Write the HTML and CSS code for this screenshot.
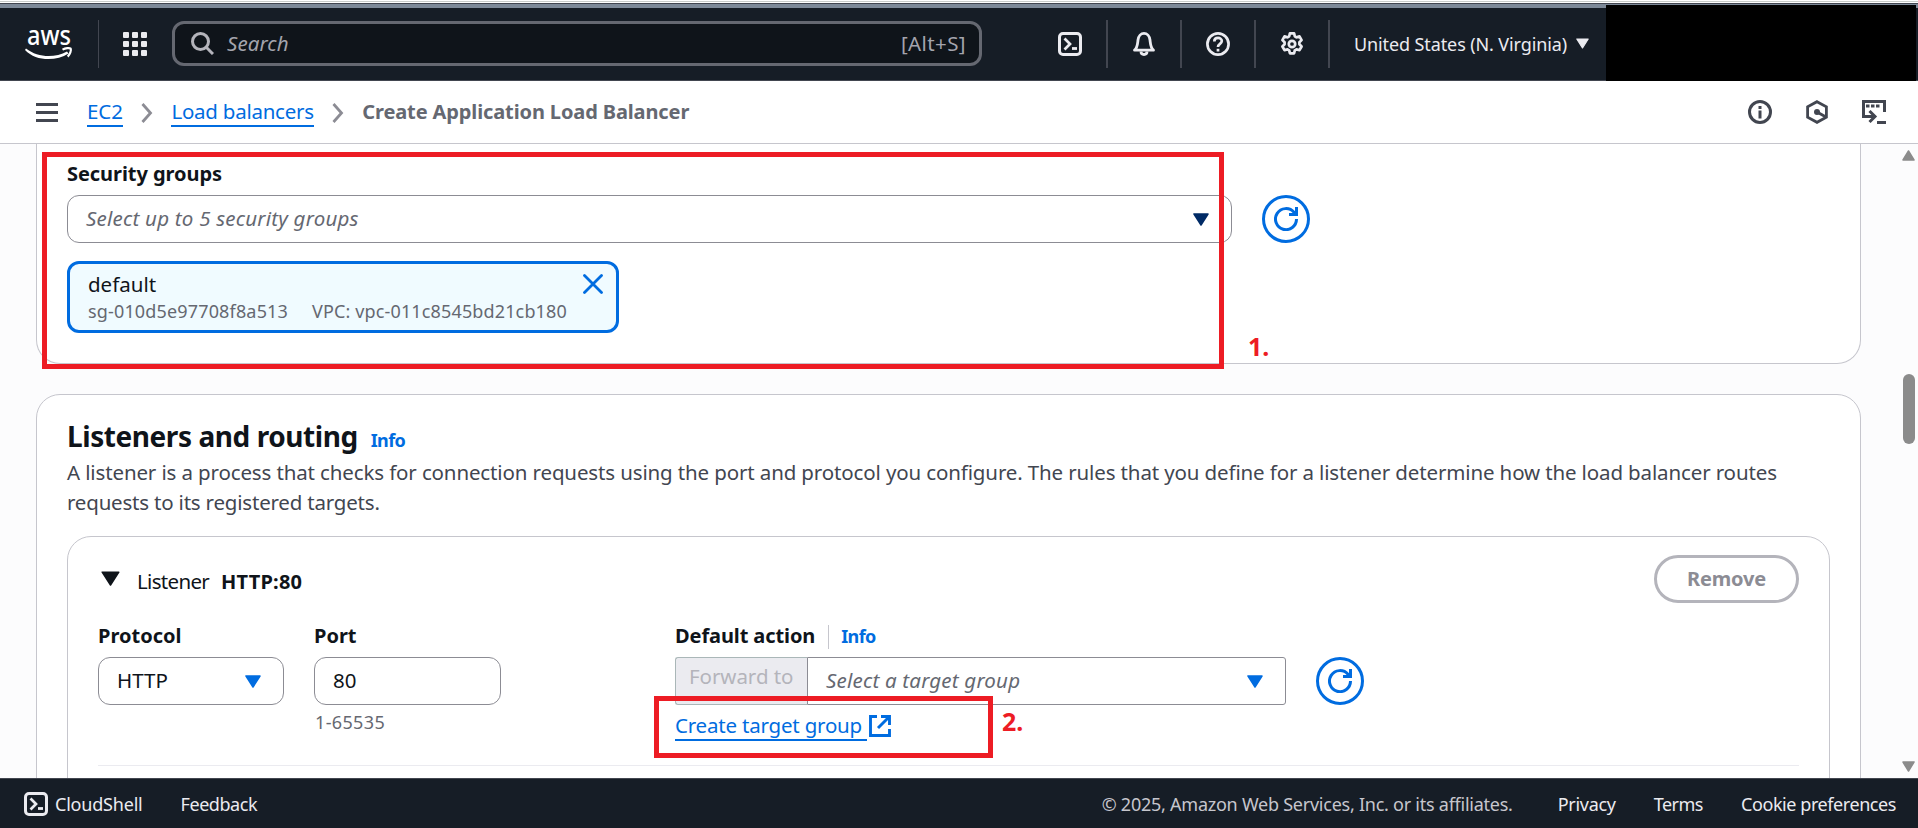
FILE: index.html
```html
<!DOCTYPE html>
<html lang="en">
<head>
<meta charset="utf-8">
<title>Create Application Load Balancer</title>
<link rel="stylesheet" href="styles.css">
</head>
<body>
<svg class="defs" width="0" height="0">
  <symbol id="shell" viewBox="0 0 24 24"><rect x="1.5" y="1.5" width="21" height="21" rx="3.5" fill="none" stroke="currentColor" stroke-width="3"/><path d="M6.5 6.5l5.5 5.5-5.5 5.5" fill="none" stroke="currentColor" stroke-width="2.7"/><path d="M14 16.5h5" stroke="currentColor" stroke-width="2.8"/></symbol>
  <symbol id="refresh" viewBox="0 0 24 24"><path d="M22.5 12A10.5 10.5 0 1 1 20 5.300L22 8" fill="none" stroke="currentColor" stroke-width="3"/><path d="M22.500 0v7.500H15" fill="none" stroke="currentColor" stroke-width="3"/></symbol>
  <symbol id="caret" viewBox="0 0 16 13"><path d="M1 1h14L8 12z" fill="currentColor" stroke="currentColor" stroke-width="1.500" stroke-linejoin="round"/></symbol>
  <symbol id="chevron" viewBox="0 0 12 20"><path d="M1.500 1L9.500 10l-8 9" fill="none" stroke="currentColor" stroke-width="2.800"/></symbol>
</svg>
<div class="page">
  <div class="strip"></div>
  <header class="topbar">
    <svg class="logo" width="50" height="52" viewBox="0 -10 50 52"><text class="aws" x="2" y="18" textLength="44" lengthAdjust="spacingAndGlyphs">aws</text><path d="M1 21.500C13 31 30 31 42 24.500l1.500 2C31 34.500 11 34.500 0 23z" fill="#fff"/><path d="M37.500 22.600c3-1.600 7-2 8.200-1 .8 1.700-.7 5.800-3 8" fill="none" stroke="#fff" stroke-width="2.200"/></svg>
    <span class="rule rule-logo"></span>
    <svg class="apps" width="24" height="24" viewBox="0 0 24 24" fill="#ebebf0"><rect width="6" height="6" rx="1"/><rect x="9" width="6" height="6" rx="1"/><rect x="18" width="6" height="6" rx="1"/><rect y="9" width="6" height="6" rx="1"/><rect x="9" y="9" width="6" height="6" rx="1"/><rect x="18" y="9" width="6" height="6" rx="1"/><rect y="18" width="6" height="6" rx="1"/><rect x="9" y="18" width="6" height="6" rx="1"/><rect x="18" y="18" width="6" height="6" rx="1"/></svg>
    <div class="search">
      <svg width="23" height="23" viewBox="0 0 23 23" fill="none" stroke="#b4b4bb" stroke-width="3"><circle cx="9.500" cy="9.500" r="8"/><path d="M15 15l7 7"/></svg>
      <em>Search</em><span class="hint-key">[Alt+S]</span>
    </div>
    <nav class="tools">
      <svg width="24" height="24"><use href="#shell"/></svg>
      <span class="rule"></span>
      <svg width="24" height="24" viewBox="0 0 24 24" fill="none" stroke="currentColor" stroke-width="2.800" stroke-linejoin="round"><path d="M2.500 18.200C5.500 16 5.500 12 6 8c.5-4 3-6.600 6-6.600S17.500 4 18 8c.5 4 .5 8 3.500 10.200z"/><path d="M9 19.500c0 4 6 4 6 0" /></svg>
      <span class="rule"></span>
      <svg width="24" height="24" viewBox="0 0 24 24" fill="none" stroke="currentColor" stroke-width="2.700"><circle cx="12" cy="12" r="10.600"/><path d="M8.300 9.500c0-4.800 7.500-4.600 7.500-.4 0 2.900-3.800 2.800-3.800 6"/><path d="M12 16.800v2.700"/></svg>
      <span class="rule"></span>
      <svg width="24" height="24" viewBox="0 0 24 24" fill="none" stroke="currentColor" stroke-width="2.700" stroke-linejoin="round"><path d="M9.900 1.400h4.200l.7 2.900 1.700 1 3-.9 2.100 3.700-2.200 2.200v2l2.200 2.200-2.100 3.700-3-.8-1.700 1-.7 2.900H9.900l-.7-2.900-1.700-1-3 .8-2.100-3.700 2.200-2.200v-2L2.400 8.100l2.100-3.700 3 .9 1.700-1z"/><circle cx="12" cy="12" r="3.200"/></svg>
      <span class="rule"></span>
    </nav>
    <span class="region">United States (N. Virginia)</span>
    <svg class="region-caret" width="13" height="11"><use href="#caret"/></svg>
    <div class="account"></div>
  </header>

  <div class="crumbs">
    <svg class="burger" width="22" height="19" viewBox="0 0 22 19" stroke="#424650" stroke-width="3"><path d="M0 1.500h22M0 9.500h22M0 17.500h22"/></svg>
    <a class="link ec2">EC2</a>
    <svg class="chev" width="12" height="20"><use href="#chevron"/></svg>
    <a class="link lbs">Load balancers</a>
    <svg class="chev" width="12" height="20"><use href="#chevron"/></svg>
    <b class="current">Create Application Load Balancer</b>
    <div class="panel-icons">
      <svg width="24" height="24" viewBox="0 0 24 24" fill="none" stroke="currentColor" stroke-width="3"><circle cx="12" cy="12" r="10.500"/><path d="M12 6v3M12 10.500v8"/></svg>
      <svg width="24" height="24" viewBox="0 0 24 24" fill="none" stroke="currentColor" stroke-width="2.800"><path d="M12 1.700l9.400 5.100v10.400L12 22.300l-9.400-5.100V6.800z"/><circle cx="12" cy="12" r="3" fill="currentColor" stroke="none"/><path d="M12 12l9 5"/></svg>
      <svg width="24" height="24" viewBox="0 0 24 24" fill="none" stroke="currentColor" stroke-width="3"><path d="M22.500 12V1.500h-21v15H12"/><path d="M7.500 11l5.500 5.500L7.500 22M15 22.500h9"/><path d="M4 6h3.500M9 6h3.500M14 6h3.500"/></svg>
    </div>
  </div>

  <main class="content">
    <div class="cards">
      <section class="card card-security">
        <b class="label security">Security groups</b>
        <div class="row">
          <div class="field select-sg"><em>Select up to 5 security groups</em><svg class="navy" width="16" height="13"><use href="#caret"/></svg></div>
          <span class="round"><svg width="24" height="24"><use href="#refresh"/></svg></span>
        </div>
        <div class="chip">
          <div class="chip-name">default</div>
          <div class="chip-meta"><span class="sg">sg-010d5e97708f8a513</span><span class="vpc">VPC: vpc-011c8545bd21cb180</span></div>
          <svg class="chip-x" width="20" height="20" viewBox="0 0 20 20" stroke="#006ce0" stroke-width="2.800" stroke-linecap="round"><path d="M1.500 1.500l17 17M18.500 1.500l-17 17"/></svg>
        </div>
      </section>

      <section class="card card-listeners">
        <div class="heading"><h2>Listeners and routing</h2><b class="info">Info</b></div>
        <p class="desc"><span>A listener is a process that checks for connection requests using the port and protocol you configure. The rules that you define for a listener determine how the load balancer routes</span><br><span class="desc-end">requests to its registered targets.</span></p>
        <div class="listener">
          <div class="listener-head">
            <svg class="ink" width="19" height="15" viewBox="0 0 19 15"><path d="M1.200 1.200h16.600L9.500 14z" fill="currentColor" stroke="currentColor" stroke-width="1.500" stroke-linejoin="round"/></svg>
            <span class="lname">Listener</span><b class="lport">HTTP:80</b>
            <button class="remove">Remove</button>
          </div>
          <div class="fields">
            <div class="col-protocol"><b class="label protocol">Protocol</b><div class="field http"><span>HTTP</span><svg class="blue" width="16" height="13"><use href="#caret"/></svg></div></div>
            <div class="col-port"><b class="label port">Port</b><div class="field"><span>80</span></div><div class="hint">1-65535</div></div>
            <div class="col-action">
              <div class="label action"><b>Default action</b><span class="bar"></span><b class="info">Info</b></div>
              <div class="joined"><div class="forward">Forward to</div><div class="field target"><em>Select a target group</em><svg class="blue" width="16" height="13"><use href="#caret"/></svg></div></div>
              <div class="create"><a class="link">Create target group&nbsp;</a><svg width="22" height="22" viewBox="0 0 22 22" fill="none" stroke="#006ce0" stroke-width="2.900"><path d="M8 1.500H1.500v19h19V14M12 1.500h8.500V10M20 2L9 13"/></svg></div>
            </div>
            <span class="round round-action"><svg width="24" height="24"><use href="#refresh"/></svg></span>
          </div>
          <div class="divider"></div>
        </div>
      </section>
    </div>
    <div class="scroll"><svg width="13" height="11" viewBox="0 0 13 11"><path d="M6.500 1L12 10H1z" fill="#8b8b8b" stroke="#8b8b8b" stroke-width="1.500" stroke-linejoin="round"/></svg><span class="thumb"></span><svg class="down" width="13" height="11" viewBox="0 0 13 11"><path d="M6.500 10L12 1H1z" fill="#8b8b8b" stroke="#8b8b8b" stroke-width="1.500" stroke-linejoin="round"/></svg></div>
  </main>

  <footer class="footer">
    <svg width="24" height="24"><use href="#shell"/></svg>
    <span class="cloudshell">CloudShell</span><span class="feedback">Feedback</span>
    <span class="copy">© 2025, Amazon Web Services, Inc. or its affiliates.</span>
    <span class="privacy">Privacy</span><span class="terms">Terms</span><span class="cookies">Cookie preferences</span>
  </footer>

  <div class="mark mark-one"></div><b class="num num-one">1.</b>
  <div class="mark mark-two"></div><b class="num num-two">2.</b>
</div>
</body>
</html>
```
FILE: styles.css
```css
* { box-sizing: border-box; }
body { margin: 0; font: 20.5px/30px "Noto Sans", "Open Sans", sans-serif; color: #0f141a; overflow: hidden; }
svg { display: block; flex: none; }
b { font-size: 20px; font-weight: 700; }
span, b, em, a { white-space: nowrap; }
.defs { position: absolute; }
.page { position: relative; width: 1918px; height: 828px; display: flex; flex-direction: column; overflow: hidden; }

.strip { flex: none; height: 8px; background: linear-gradient(#fff 0 1px, #c9ccc9 1px 2px, #fff 2px 3px, #424650 3px 4px, #7d8998 4px); }
.topbar { flex: none; height: 73px; display: flex; align-items: center; padding: 0 2px 1px 25px; background: #161d26; border-bottom: 1px solid #424650; color: #ebebf0; }
.logo { margin-bottom: 2px; }
.aws { font: 500 26.5px "Noto Sans", sans-serif; fill: #fff; }
.rule { flex: none; width: 2px; height: 48px; background: #424650; }
.rule-logo { width: 1px; margin-left: 23px; }
.apps { margin-left: 24px; }
.search { flex: none; width: 810px; height: 45px; margin-left: 25px; padding: 0 13px 0 16px; display: flex; align-items: center; border: 3px solid #656871; border-radius: 12px; background: #0f141a; color: #a4a4ad; }
.search em { margin-left: 13px; letter-spacing: .1px; }
.hint-key { margin-left: auto; letter-spacing: .4px; }
.search em, .hint-key { padding-bottom: 2px; }
.tools { display: flex; align-items: center; gap: 24px; margin-left: 76px; }
.region { margin-left: 24px; font-size: 18px; letter-spacing: -.11px; }
.region-caret { margin-left: 9px; }
.account { align-self: stretch; flex: none; width: 310px; margin: -3px 0 -2px auto; background: #000; }

.crumbs { flex: none; height: 63px; display: flex; align-items: center; padding: 0 32px 0 36px; border-bottom: 1px solid #c6c6cd; background: #fff; }
.link { color: #006ce0; border-bottom: 2px solid #006ce0; line-height: 28px; }
.ec2 { margin-left: 29px; letter-spacing: -.05px; }
.lbs { letter-spacing: -.25px; }
.chev { margin: 1px 18px 0 18.5px; color: #8c8c94; }
.current { color: #656871; letter-spacing: -.12px; }
.panel-icons { margin-left: auto; display: flex; gap: 33px; color: #424650; }

.content { flex: none; height: 634px; display: flex; background: #fcfcfd; overflow: hidden; }
.cards { width: 1861px; padding-left: 36px; }
.card { border: 1px solid #c6c6cd; background: #fff; }
.card-security { height: 220px; padding: 15px 30px 0; border-top: 0; border-radius: 0 0 24px 24px; }
.label { display: block; height: 30px; margin-bottom: 6px; }
.security { letter-spacing: -.06px; }
.row { display: flex; gap: 30px; }
.field { display: flex; align-items: center; justify-content: space-between; height: 48px; padding: 0 17px 0 18px; border: 1px solid #8c8c94; border-radius: 12px; background: #fff; }
.field em { color: #656871; letter-spacing: .22px; }
.field em, .field span { padding-bottom: 2px; }
.select-sg { width: 1165px; padding-right: 22px; }
.navy { color: #002b66; }
.blue { color: #006ce0; }
.round { display: flex; align-items: center; justify-content: center; width: 48px; height: 48px; border: 3px solid #006ce0; border-radius: 50%; color: #006ce0; }
.chip { position: relative; width: 552px; height: 72px; margin-top: 18px; padding: 5px 0 0 18px; border: 3px solid #006ce0; border-radius: 12px; background: #f0fbff; }
.chip-meta { display: flex; gap: 24px; font-size: 18px; line-height: 24px; color: #656871; }
.sg { letter-spacing: .157px; }
.vpc { letter-spacing: .14px; }
.chip-x { position: absolute; right: 13px; top: 10px; }

.card-listeners { height: 500px; margin-top: 30px; padding: 23px 30px 0; border-radius: 24px 24px 0 0; }
.heading { display: flex; align-items: baseline; height: 36px; }
h2 { margin: 0; font-size: 28px; line-height: 36px; letter-spacing: -.43px; }
.info { font-size: 18px; color: #006ce0; letter-spacing: -.6px; }
.heading .info { margin-left: 13px; }
.desc { margin: 3px 0 19px; color: #424650; letter-spacing: -.13px; }
.desc-end { letter-spacing: -.2px; }
.listener { height: 400px; border: 1px solid #c6c6cd; border-radius: 24px; padding: 18px 30px 0 30px; }
.listener-head { display: flex; align-items: center; height: 48px; }
.ink { margin: -2px 17px 0 3px; }
.lname { margin-top: 4px; letter-spacing: -.68px; }
.lport { margin: 5px 0 0 12px; letter-spacing: .2px; }
.remove { width: 145px; height: 48px; margin-left: auto; border: 3px solid #b4b4bb; border-radius: 24px; background: #fff; color: #8c8c94; font: 700 20px "Noto Sans", sans-serif; letter-spacing: -.2px; padding: 0 0 2px; }
.fields { display: flex; margin-top: 18px; height: 144px; }
.col-protocol { width: 186px; }
.col-port { width: 187px; margin-left: 30px; }
.col-action { width: 611px; margin-left: 174px; }
.http { padding-right: 22px; }
.hint { margin: 5px 0 0 1px; font-size: 18px; line-height: 24px; letter-spacing: .35px; color: #656871; }
.action { display: flex; align-items: center; letter-spacing: -.1px; }
.bar { width: 1px; height: 24px; margin: 1px 12px 0 13px; background: #c6c6cd; }
.joined { display: flex; }
.forward { width: 132px; height: 48px; padding: 3px 0 0 13px; border: 1px solid #aab7b8; border-right: 0; border-radius: 3px 0 0 3px; background: #ebebf0; color: #b4b4bb; letter-spacing: -.05px; }
.target { flex: 1; border-radius: 0 3px 3px 0; padding-right: 22px; }
.target em { letter-spacing: .2px; }
.create { display: flex; align-items: center; gap: 2px; height: 30px; margin-top: 6px; letter-spacing: -.2px; }
.round-action { margin: 36px 0 0 30px; }
.divider { height: 1px; background: #ebebf0; }

.scroll { margin-left: 41px; display: flex; flex-direction: column; align-items: center; padding: 6px 0 6px; }
.thumb { width: 12px; height: 70px; margin-top: 213px; border-radius: 6px; background: #8b8b8b; }
.down { margin-top: auto; }

.footer { flex: none; height: 50px; display: flex; align-items: center; padding: 1px 22px 0 24px; border-top: 1px solid #424650; background: #161d26; color: #ebebf0; font-size: 18px; }
.cloudshell { margin-left: 7px; letter-spacing: -.2px; }
.feedback { margin-left: 38px; letter-spacing: -.45px; }
.copy { margin-left: auto; color: #c6c6cd; letter-spacing: -.246px; }
.privacy { margin-left: 45px; letter-spacing: -.29px; }
.terms { margin-left: 38px; letter-spacing: -.5px; }
.cookies { margin-left: 38px; letter-spacing: -.425px; }

.mark { position: absolute; border: 5px solid #ed1c24; }
.mark-one { left: 42px; top: 152px; width: 1182px; height: 217px; }
.mark-two { left: 654px; top: 696px; width: 339px; height: 62px; }
.num { position: absolute; font-size: 25px; line-height: 30px; color: #ed1c24; }
.num-one { left: 1248px; top: 331px; }
.num-two { left: 1002px; top: 706px; }
```
